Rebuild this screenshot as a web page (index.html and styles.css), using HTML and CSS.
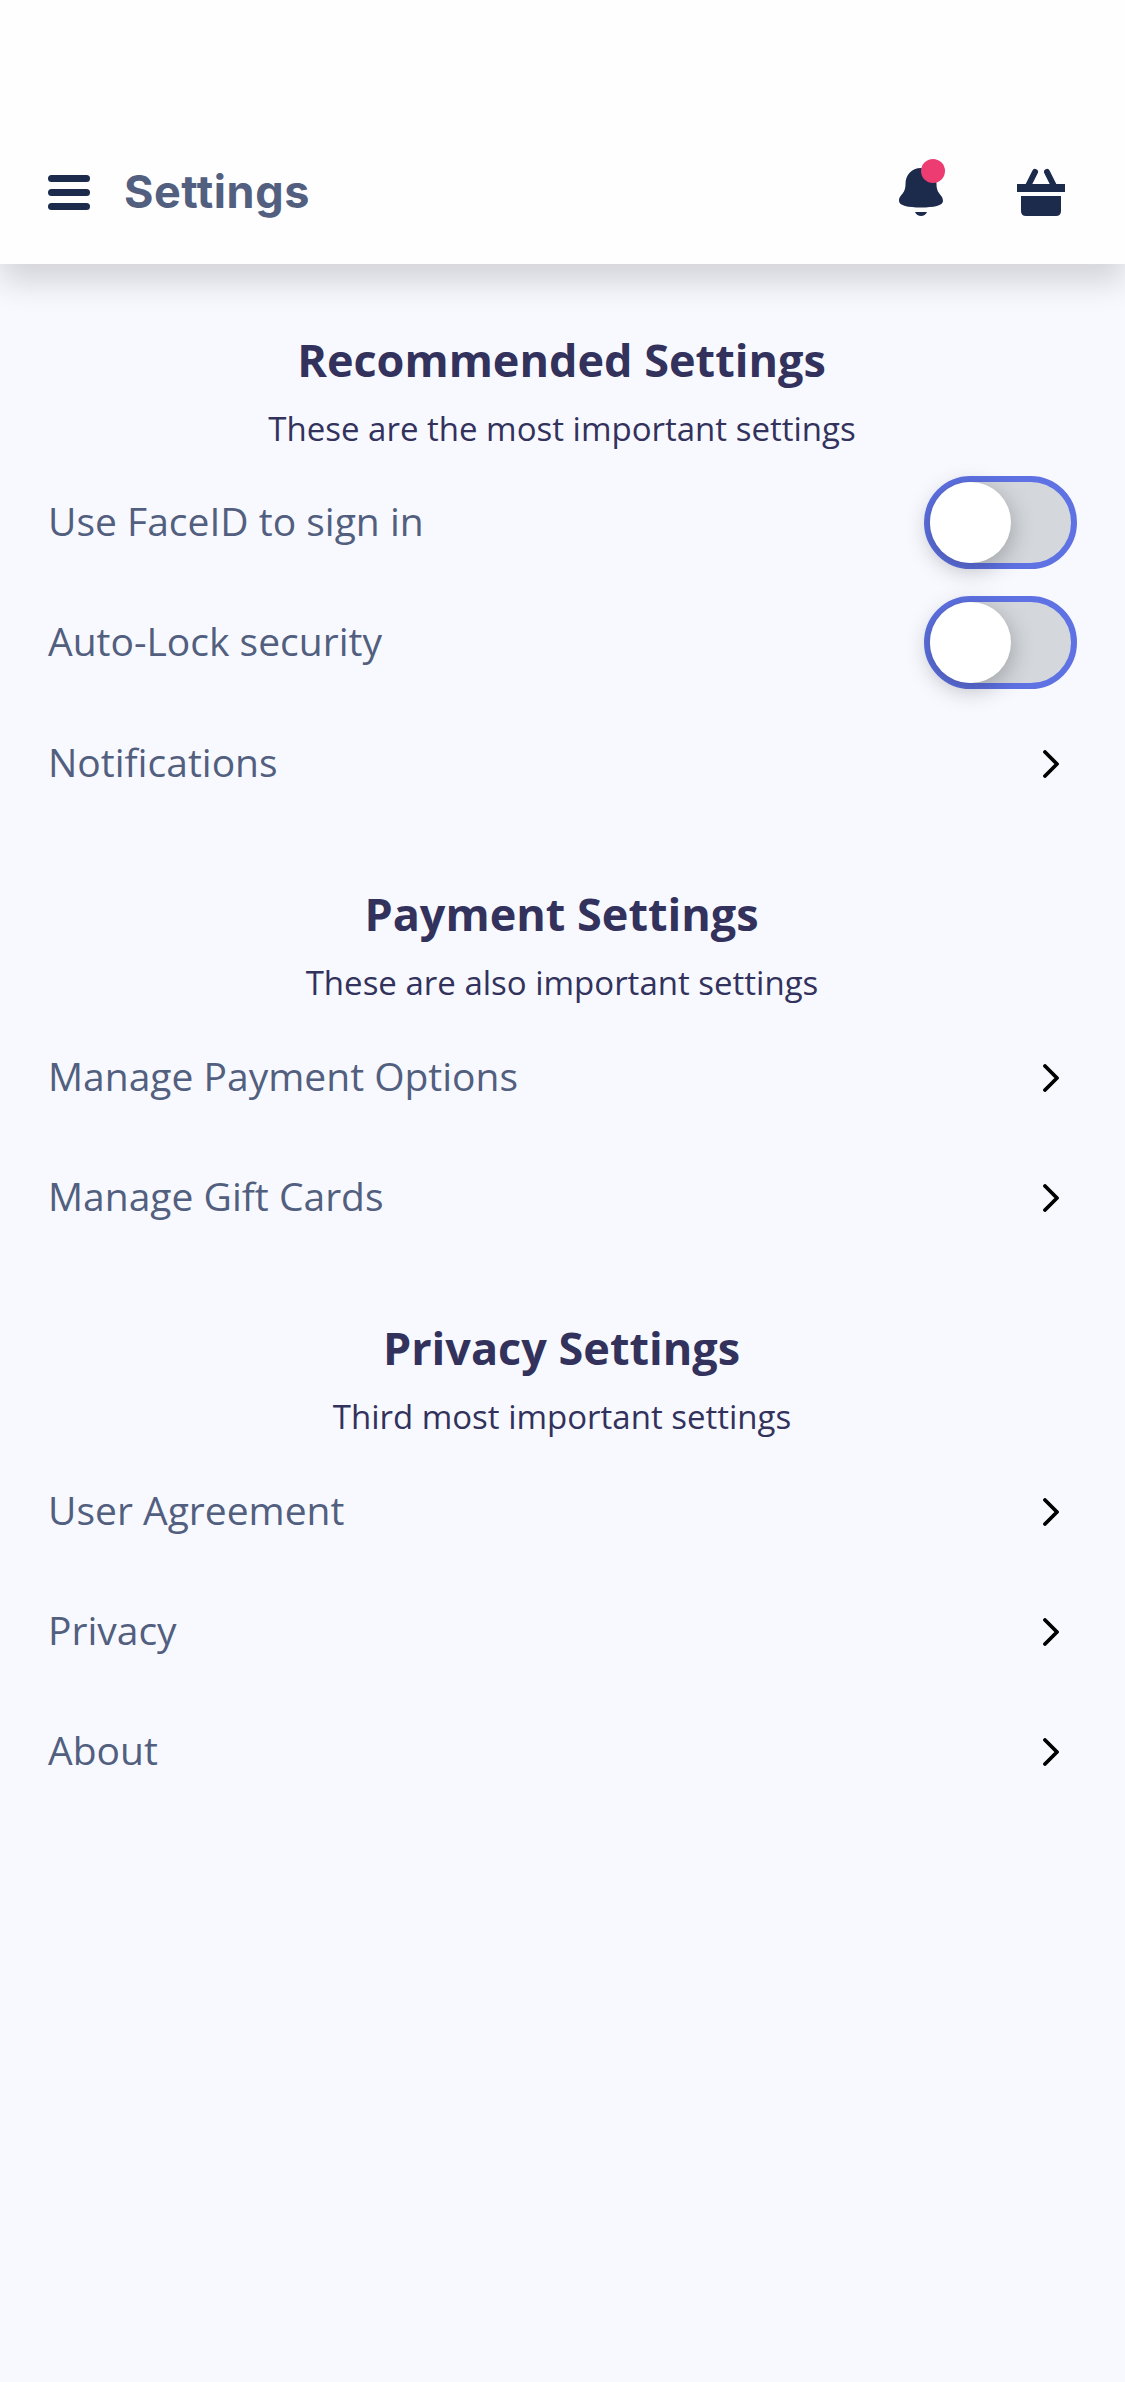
FILE: index.html
```html
<!DOCTYPE html>
<html lang="en">
<head>
<meta charset="utf-8">
<title>Settings</title>
<link rel="stylesheet" href="styles.css">
</head>
<body>
<header class="navbar">
  <svg class="menu-icon" width="42" height="36" viewBox="0 0 42 36" fill="#1c2a4c"><rect width="42" height="7" rx="3.5"/><rect y="14" width="42" height="7" rx="3.5"/><rect y="28" width="42" height="7" rx="3.5"/></svg>
  <h1 class="navbar-title">Settings</h1>
  <div class="bell">
    <svg width="44" height="48" viewBox="0 0 44 48" fill="#1c2a4c"><path d="M22 0C12.500 0 6.500 7 6.500 16C6.500 27 0 26 0 33C0 37.500 9 39.500 22 39.500S44 37.500 44 33C44 26 37.500 27 37.500 16C37.500 7 31.500 0 22 0Z"/><path d="M16 44H28C27 46.500 24.500 48 22 48S17 46.500 16 44Z"/></svg>
    <span class="badge"></span>
  </div>
  <svg class="basket" width="48" height="48" viewBox="0 0 48 48" fill="#1c2a4c"><path d="M0 16H48V24H0ZM4 28H44V43Q44 48 39 48H9Q4 48 4 43Z"/><path d="M18 4L11.500 17M30 4L36.500 17" stroke="#1c2a4c" stroke-width="6" stroke-linecap="round"/></svg>
</header>
<main>
  <section>
    <div class="heading"><h2>Recommended Settings</h2><p>These are the most important settings</p></div>
    <div class="row toggle-row"><span>Use FaceID to sign in</span><span class="switch"><i class="knob"></i></span></div>
    <div class="row toggle-row"><span>Auto-Lock security</span><span class="switch"><i class="knob"></i></span></div>
    <div class="row"><span>Notifications</span><svg class="chevron" viewBox="0 0 16 28"><path d="M2 2L14 14L2 26"/></svg></div>
  </section>
  <section>
    <div class="heading"><h2>Payment Settings</h2><p>These are also important settings</p></div>
    <div class="row"><span>Manage Payment Options</span><svg class="chevron" viewBox="0 0 16 28"><path d="M2 2L14 14L2 26"/></svg></div>
    <div class="row"><span>Manage Gift Cards</span><svg class="chevron" viewBox="0 0 16 28"><path d="M2 2L14 14L2 26"/></svg></div>
  </section>
  <section>
    <div class="heading"><h2>Privacy Settings</h2><p>Third most important settings</p></div>
    <div class="row"><span>User Agreement</span><svg class="chevron" viewBox="0 0 16 28"><path d="M2 2L14 14L2 26"/></svg></div>
    <div class="row"><span>Privacy</span><svg class="chevron" viewBox="0 0 16 28"><path d="M2 2L14 14L2 26"/></svg></div>
    <div class="row"><span>About</span><svg class="chevron" viewBox="0 0 16 28"><path d="M2 2L14 14L2 26"/></svg></div>
  </section>
</main>
</body>
</html>
```
FILE: styles.css
```css
* { box-sizing: border-box; margin: 0; padding: 0; }
body { min-height: 2382px; background: #f8f9fe; font-family: "Open Sans", sans-serif; }
.navbar { position: relative; display: flex; align-items: center; height: 264px; padding: 120px 60px 0 48px; background: #fefefe; box-shadow: 0 18px 30px rgba(0,0,0,.15); }
.menu-icon { margin-top: 2px; }
.navbar-title { flex: 1; margin-left: 34px; font: 650 45px/60px Inter, sans-serif; letter-spacing: .55px; color: #525f7f; }
.bell { position: relative; height: 48px; margin-right: 74px; }
.bell svg { display: block; }
.badge { position: absolute; left: 22px; top: -9px; width: 24px; height: 24px; border-radius: 50%; background: #ec3c72; }
.heading { height: 194px; padding: 61px 1px 0 0; text-align: center; color: #32325d; }
.heading h2 { padding-right: 1px; font-size: 45px; line-height: 62px; font-weight: 700; }
.heading p { margin-top: 15px; font-size: 33px; line-height: 45px; }
main { padding-top: 4px; }
.row { display: flex; align-items: center; justify-content: space-between; height: 120px; padding: 0 48px; font-size: 39px; line-height: 54px; color: #525f7f; }
.toggle-row > span:first-child { padding-bottom: 2px; }
.switch { width: 153px; height: 93px; border: 6px solid #5e72e4; border-radius: 47px; background: #d4d8dd; }
.knob { display: block; width: 81px; height: 81px; border-radius: 50%; background: #fff; box-shadow: 0 6px 24px rgba(0,0,0,.28); }
.chevron { width: 16px; height: 28px; margin: 4px 18px 0 0; fill: none; stroke: #000; stroke-width: 3.8; stroke-linecap: round; stroke-linejoin: round; }
```
